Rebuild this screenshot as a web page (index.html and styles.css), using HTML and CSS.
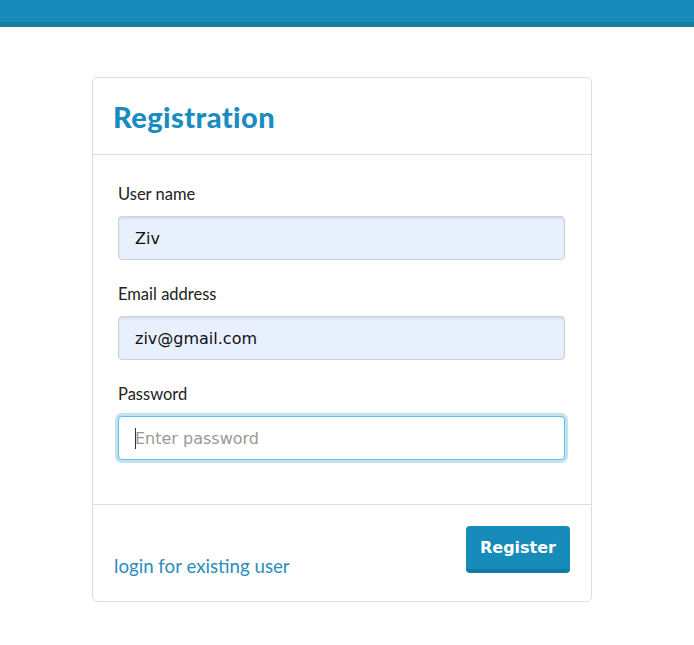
FILE: index.html
```html
<!DOCTYPE html>
<html>
<head>
<meta charset="utf-8">
<link rel="stylesheet" href="styles.css">
</head>
<body>
<div class="topbar"></div>
<div class="card">
  <div class="card-header"><h1>Registration</h1></div>
  <div class="card-body">
    <div class="field">
      <label>User name</label>
      <div class="input filled">Ziv</div>
    </div>
    <div class="field">
      <label>Email address</label>
      <div class="input filled">ziv@gmail.com</div>
    </div>
    <div class="field">
      <label>Password</label>
      <div class="input focused"><span class="caret"></span><span class="placeholder">Enter password</span></div>
    </div>
  </div>
  <div class="card-footer">
    <a class="link" href="#">login for existing user</a>
    <button class="btn">Register</button>
  </div>
</div>
</body>
</html>
```
FILE: styles.css
```css
html, body { margin: 0; padding: 0; background: #fff; }
body { font-family: Lato, "Open Sans", sans-serif; color: #222; }
.topbar { height: 22px; background: #178bba; border-bottom: 5px solid #137fa3; }
.card {
  margin: 50px 0 0 92px;
  width: 498px;
  border: 1px solid #dedede;
  border-radius: 5px;
}
.card-header { height: 76px; border-bottom: 1px solid #dedede; display: flex; align-items: center; padding-left: 21px; }
.card-header h1 { margin: 0; font-size: 29px; font-weight: 900; color: #1a8cbf; letter-spacing: 0.4px; padding-top: 1px; margin-left: -1px; }
.card-body { padding: 26px 26px 24px 25px; }
.field { margin-bottom: 22px; }
.field:last-child { margin-bottom: 20px; }
.field label { display: block; font-size: 16.5px; line-height: 24px; color: #222; margin-top: 1px; margin-bottom: 10px; }
.input {
  box-sizing: border-box;
  height: 44px;
  border: 1px solid #c9d0da;
  border-radius: 4px;
  padding: 0 16px;
  display: flex; align-items: center;
  font-family: "DejaVu Sans", sans-serif;
  font-size: 16px;
  color: #111;
}
.filled { background: #e8f0fe; box-shadow: inset 0 2px 2px rgba(0,0,0,0.08); }
.focused { background: #fff; border: 1px solid #5bc0eb; box-shadow: 0 0 0 3px #c3e2ee; position: relative; }
.placeholder { color: #999; }
.caret { display: inline-block; width: 1px; height: 21px; background: #333; position: absolute; left: 16px; }
.card-footer {
  border-top: 1px solid #dedede;
  padding: 21px 21px 22px 21px;
  display: flex; justify-content: space-between; align-items: flex-end;
}
.link { color: #2a8dbd; text-decoration: none; font-size: 18.7px; line-height: 25px; }
.btn {
  width: 104px; height: 47px;
  background: #178bba;
  border: none;
  border-bottom: 4px solid #137aa2;
  border-radius: 4px;
  color: #fff;
  font-family: "DejaVu Sans", sans-serif;
  font-weight: 700;
  font-size: 16px;
  margin-bottom: 6px;
  padding: 0;
}
```
